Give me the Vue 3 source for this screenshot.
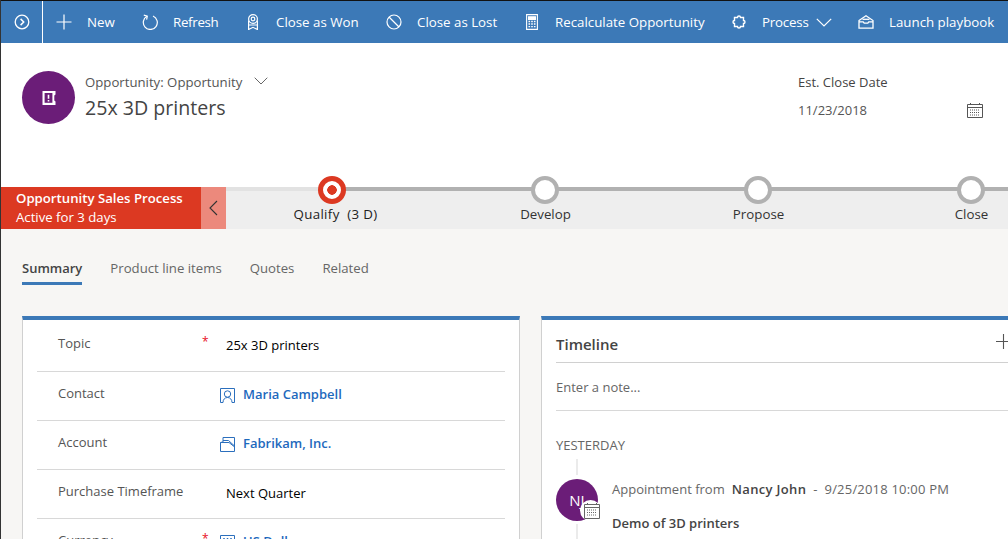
<template>
  <div class="page">
    <!-- command bar -->
    <div class="cmdbar">
      <div class="toggle">
        <svg width="16" height="16" viewBox="0 0 16 16" fill="none" stroke="#fff" stroke-width="1.3">
          <circle cx="8" cy="8" r="6.8" />
          <path d="M6.6 4.9 9.7 8l-3.1 3.1" stroke-width="1.5" />
        </svg>
      </div>
      <div class="cmd cmd-new">
        <svg class="ic" viewBox="0 0 16 16" fill="none" stroke="#fff" stroke-width="1.2"><path d="M8 .5v15M.5 8h15" /></svg>
        <span>New</span>
      </div>
      <div class="cmd cmd-refresh">
        <svg class="ic" viewBox="0 0 16 16" fill="none" stroke="#fff" stroke-width="1.2">
          <path d="M5 2.3A7 7 0 1 0 11 2" />
          <path d="M1.8 1.2 5.3 2.2 4.6 5.6" />
        </svg>
        <span>Refresh</span>
      </div>
      <div class="cmd cmd-won">
        <svg class="ic" viewBox="0 0 16 16" fill="none" stroke="#fff" stroke-width="1.2">
          <circle cx="8" cy="5" r="4.4" />
          <circle cx="8" cy="5" r="1.8" />
          <path d="M3.6 6.5V15.5L8 13.3l4.4 2.2V6.5M3.6 11h8.8" />
        </svg>
        <span>Close as Won</span>
      </div>
      <div class="cmd cmd-lost">
        <svg class="ic" viewBox="0 0 16 16" fill="none" stroke="#fff" stroke-width="1.2">
          <circle cx="8" cy="8" r="7" />
          <path d="M3 3l10 10" />
        </svg>
        <span>Close as Lost</span>
      </div>
      <div class="cmd cmd-calc">
        <svg class="ic" viewBox="0 0 16 16" fill="none" stroke="#fff" stroke-width="1.1">
          <path d="M2.6.6h10.8v14.8H2.6z" />
          <path d="M4.5 2.8h7v2.6h-7z" fill="#fff" />
          <path d="M4.5 7.5h7M4.5 10h7M4.5 12.6h7" stroke-width="1.4" stroke-dasharray="1.6 1.1" />
        </svg>
        <span>Recalculate Opportunity</span>
      </div>
      <div class="cmd cmd-process">
        <svg class="ic" viewBox="0 0 16 16" fill="none" stroke="#fff" stroke-width="1.4">
          <path d="M6.5 3.5a1.5 1.5 0 0 1 3 0H12.5V6.5a1.5 1.5 0 0 1 0 3V12.5H9.500a1.500 1.500 0 0 1-3 0H3.500V9.500a1.500 1.500 0 0 1 0-3V3.500z" />
        </svg>
        <span>Process</span>
        <svg class="cmd-chev" viewBox="0 0 16 9" fill="none" stroke="#fff" stroke-width="1.2"><path d="M.8.8 8 8l7.200-7.200" /></svg>
      </div>
      <div class="cmd cmd-play">
        <svg class="ic" viewBox="0 0 16 16" fill="none" stroke="#fff" stroke-width="1.3">
          <path d="M1 6.500 8 1.800l7 4.700v7.700H1z" />
          <path d="M1 7.800h4.200l1 1.400h3.600l1-1.400H15" />
          <path d="M4.500 5.300h7" />
        </svg>
        <span>Launch playbook</span>
      </div>
    </div>

    <!-- record header -->
    <div class="header">
      <div class="avatar">
        <svg width="14" height="16" viewBox="0 0 14 16" fill="none">
          <path d="M.5 1h13v3.400l-1.200 1v5l1.200 1V15H.5z" fill="#fff" />
          <path d="M2.600 3h7.800v9.800H2.600z" fill="#6b1d78" />
          <path d="M6.500 4.800v4M6.500 10v1.400" stroke="#fff" stroke-width="1.600" />
        </svg>
      </div>
      <div class="titles">
        <div class="form-name">
          <span>Opportunity: Opportunity</span>
          <svg class="form-chev" viewBox="0 0 14 8" fill="none" stroke="#666" stroke-width="1"><path d="M.7.7 7 7l6.300-6.300" /></svg>
        </div>
        <div class="rec-name">25x 3D printers</div>
      </div>
      <div class="close-date">
        <div class="cd-label">Est. Close Date</div>
        <div class="cd-row">
          <span>11/23/2018</span>
          <svg width="16" height="15" viewBox="0 0 16 15" fill="none" stroke="#555" stroke-width="1">
            <path d="M.5 1.500h15v13H.5zM.5 4.500h15M3.500 0v2M12.500 0v2" />
            <path d="M3 7h10M3 9.500h10M3 12h10" stroke-dasharray="1 1" />
          </svg>
        </div>
      </div>
    </div>

    <!-- business process flow -->
    <div class="bpf">
      <div class="bpf-name">
        <div class="bpf-title">Opportunity Sales Process</div>
        <div>Active for 3 days</div>
      </div>
      <div class="bpf-collapse">
        <svg width="9" height="16" viewBox="0 0 9 16" fill="none" stroke="#333" stroke-width="1.1"><path d="M8 1 1 8l7 7" /></svg>
      </div>
      <div class="stages">
        <div class="line-done"></div>
        <div class="line-rest"></div>
        <div v-for="(s, i) in stages" :key="s" class="stage" :class="{ active: i === 0 }">
          <div class="dot"></div>
          <div class="stage-label">{{ s }}</div>
        </div>
      </div>
    </div>

    <!-- tabs -->
    <div class="tabs">
      <div v-for="(t, i) in tabs" :key="t" class="tab" :class="{ on: i === 0 }">{{ t }}</div>
    </div>

    <!-- body -->
    <div class="cols">
      <div class="card form">
        <div class="row">
          <div class="lbl">Topic</div>
          <div class="req">*</div>
          <div class="val">25x 3D printers</div>
        </div>
        <div class="row">
          <div class="lbl">Contact</div>
          <div class="req"></div>
          <div class="val link">
            <svg class="lk" viewBox="0 0 15 15" fill="none" stroke="#2b6fbd" stroke-width="1">
              <path d="M3 14.500H.5V.5h14v14H12" />
              <circle cx="7.500" cy="6" r="3.200" />
              <path d="M3 14.500c0-3 1.800-5 4.500-5s4.500 2 4.500 5" />
            </svg>
            <span>Maria Campbell</span>
          </div>
        </div>
        <div class="row">
          <div class="lbl">Account</div>
          <div class="req"></div>
          <div class="val link">
            <svg class="lk" viewBox="0 0 15 15" fill="none" stroke="#2b6fbd" stroke-width="1">
              <path d="M.5 5.500v9h14V9" />
              <path d="M.5 5.500 3 5V.5h11.500V9L14 8.500 8.500 3.500H3" />
              <path d="M.5 5.500H9l5 4" />
            </svg>
            <span>Fabrikam, Inc.</span>
          </div>
        </div>
        <div class="row">
          <div class="lbl">Purchase Timeframe</div>
          <div class="req"></div>
          <div class="val">Next Quarter</div>
        </div>
        <div class="row last">
          <div class="lbl">Currency</div>
          <div class="req">*</div>
          <div class="val link">
            <svg class="lk" viewBox="0 0 15 15" fill="none" stroke="#2b6fbd" stroke-width="1">
              <path d="M.5.500h14v14H.5z" />
              <path d="M4 3v3M7.500 3v3M11 3v3" stroke-width="1.500" />
            </svg>
            <span>US Dollar</span>
          </div>
        </div>
      </div>

      <div class="card timeline">
        <div class="tl-head">
          <span>Timeline</span>
          <svg class="tl-plus" viewBox="0 0 15 15" fill="none" stroke="#555" stroke-width="1.100"><path d="M7.500 0v15M0 7.500h15" /></svg>
        </div>
        <div class="tl-note">Enter a note...</div>
        <div class="tl-day">YESTERDAY</div>
        <div class="tl-track"></div>
        <div class="tl-item">
          <div class="tl-avatar">
            <span>NJ</span>
            <div class="tl-badge">
              <svg width="16" height="16" viewBox="0 0 16 16" fill="none" stroke="#666" stroke-width="1">
                <path d="M.5 1.500h15v14H.5zM.5 4.500h15M3.500 0v2M12.500 0v2" />
                <path d="M3 7h10M3 9.500h10M3 12h10" stroke-dasharray="1 1" />
              </svg>
            </div>
          </div>
          <div class="tl-body">
            <div class="tl-meta">
              <span>Appointment from</span>
              <b>Nancy John</b>
              <span>-</span>
              <span class="tl-date">9/25/2018 10:00 PM</span>
            </div>
            <div class="tl-title">Demo of 3D printers</div>
          </div>
        </div>
      </div>
    </div>
  </div>
</template>

<script setup>
const stages = ['Qualify  (3 D)', 'Develop', 'Propose', 'Close']
const tabs = ['Summary', 'Product line items', 'Quotes', 'Related']
</script>

<style>
html, body {
  margin: 0;
  background: #fff;
  overflow: hidden;
}
</style>

<style scoped>
.page {
  width: 1008px;
  height: 539px;
  overflow: hidden;
  box-sizing: border-box;
  border-left: 1px solid #333;
  background: #f7f6f4;
  font-family: "Open Sans", "Noto Sans", sans-serif;
  font-size: 13px;
  color: #333;
}

.cmdbar {
  height: 42px;
  border-top: 1px solid #111;
  background: #3c79b7;
  color: #fff;
  display: flex;
  align-items: center;
  white-space: nowrap;
  overflow: hidden;
}
.toggle {
  width: 42px;
  height: 42px;
  flex: none;
  box-sizing: border-box;
  border-right: 1px solid #fff;
  display: flex;
  align-items: center;
  justify-content: center;
}
.cmd {
  display: flex;
  align-items: center;
  flex: none;
  font-size: 13.3px;
}
.ic {
  width: 16px;
  height: 16px;
  margin-right: 15px;
  flex: none;
}
.cmd-new { margin-left: 13px; width: 86px; }
.cmd-refresh { width: 103px; letter-spacing: -0.3px; }
.cmd-won { width: 141px; }
.cmd-lost { width: 138px; }
.cmd-calc { width: 207px; }
.cmd-process { width: 127px; letter-spacing: -0.2px; }
.cmd-play { width: 140px; }
.cmd-chev {
  width: 16px;
  height: 9px;
  margin-left: 7px;
}

.header {
  height: 144px;
  background: #fff;
  display: flex;
  box-sizing: border-box;
  padding: 28px 0 0 21px;
}
.avatar {
  width: 53px;
  height: 53px;
  border-radius: 50%;
  background: #6b1d78;
  display: flex;
  align-items: center;
  justify-content: center;
  flex: none;
}
.titles {
  margin-left: 10px;
  width: 713px;
}
.form-name {
  font-size: 13.2px;
  line-height: 20px;
  margin-top: 1px;
  color: #555;
  display: flex;
  align-items: center;
}
.form-chev {
  width: 14px;
  height: 8px;
  margin: -3px 0 0 12px;
}
.rec-name {
  font-size: 19.6px;
  line-height: 28px;
  margin-top: 2px;
  color: #444;
}
.close-date {
  width: 185px;
  color: #444;
}
.cd-label {
  line-height: 20px;
  margin-top: 1px;
}
.cd-row {
  display: flex;
  justify-content: space-between;
  align-items: center;
  margin-top: 8px;
  line-height: 20px;
  color: #555;
}

.bpf {
  height: 42px;
  display: flex;
  background: #eeeeee;
}
.bpf-name {
  width: 200px;
  flex: none;
  box-sizing: border-box;
  padding: 2px 0 0 15px;
  background: #dc3922;
  color: #fff;
  font-size: 13.2px;
  line-height: 19px;
}
.bpf-title {
  font-weight: 600;
}
.bpf-collapse {
  width: 25px;
  flex: none;
  background: #ec897c;
  display: flex;
  align-items: center;
  justify-content: center;
}
.stages {
  position: relative;
  display: flex;
  flex: none;
  width: 782px;
}
.line-done,
.line-rest {
  position: absolute;
  top: 0;
  height: 4px;
}
.line-done {
  left: 0;
  width: 106px;
  background: #e2e2e2;
}
.line-rest {
  left: 106px;
  right: 0;
  background: #b1b1b1;
}
.stage {
  position: relative;
  width: 213px;
  flex: none;
  display: flex;
  flex-direction: column;
  align-items: center;
}
.stage.active {
  margin-left: -1px;
}
.dot {
  width: 28px;
  height: 28px;
  box-sizing: border-box;
  margin-top: -11px;
  border: 4px solid #b1b1b1;
  border-radius: 50%;
  background: #fff;
  z-index: 1;
}
.stage.active .dot {
  border: 5px solid #dc3922;
  background: radial-gradient(circle, #dc3922 0 4.5px, #fff 5px);
}
.stage-label {
  margin: 0 0 0 2px;
  font-size: 13.3px;
  line-height: 20px;
  white-space: pre;
  color: #333;
}
.stage.active .stage-label {
  margin-left: 8px;
  letter-spacing: 0.35px;
  color: #222;
}

.tabs {
  height: 87px;
  box-sizing: border-box;
  display: flex;
  align-items: flex-start;
  gap: 28px;
  padding: 29px 0 0 21px;
  color: #666;
  font-size: 13.2px;
}
.tab {
  line-height: 20px;
  height: 27px;
  box-sizing: border-box;
}
.tab.on {
  color: #444;
  font-size: 13px;
  font-weight: 600;
  border-bottom: 3px solid #3c79b7;
}

.cols {
  display: flex;
  gap: 21px;
  padding-left: 21px;
}
.card {
  flex: none;
  background: #fff;
  box-sizing: border-box;
  border: 1px solid #d0d0d0;
  border-top: 4px solid #3c79b7;
  height: 260px;
}
.form {
  width: 498px;
  padding: 0 14px;
}
.row {
  height: 49px;
  box-sizing: border-box;
  border-bottom: 1px solid #d8d8d8;
  display: flex;
  align-items: flex-start;
  padding: 11px 0 0 21px;
  line-height: 20px;
}
.row:first-child {
  height: 52px;
  padding-top: 13px;
}
.row.last {
  border-bottom: 0;
}
.lbl {
  width: 145px;
  flex: none;
  color: #555;
}
.req {
  width: 17px;
  flex: none;
  margin-top: -1px;
  margin-left: -1px;
  margin-right: 1px;
  font-size: 12px;
  color: #e81123;
}
.val {
  padding-left: 6px;
  margin-top: 2px;
  color: #000;
}
.val.link {
  display: flex;
  align-items: center;
  padding-left: 0;
  color: #1e69bd;
  font-weight: 600;
  margin-top: 1px;
}
.lk {
  width: 15px;
  height: 15px;
  margin-right: 8px;
  margin-top: 3px;
}
.timeline {
  width: 480px;
  padding: 0 14px;
  border-right: 0;
}
.tl-head {
  height: 43px;
  box-sizing: border-box;
  padding-top: 14px;
  font-size: 15px;
  line-height: 20px;
  font-weight: 600;
  color: #444;
  border-bottom: 1px solid #d0d0d0;
  display: flex;
  justify-content: space-between;
  margin-right: -14px;
}
.tl-plus {
  width: 15px;
  height: 15px;
  margin-right: 10px;
}
.tl-note {
  height: 48px;
  box-sizing: border-box;
  padding-top: 14px;
  line-height: 20px;
  color: #666;
  border-bottom: 1px solid #d8d8d8;
  margin-right: -14px;
}
.tl-day {
  margin-top: 24px;
  line-height: 20px;
  color: #666;
}
.tl-track {
  width: 2px;
  height: 16px;
  margin: 4px 0 0 20px;
  background: #ebebeb;
}
.tl-item {
  margin-top: 4px;
  display: flex;
}
.tl-avatar {
  position: relative;
  width: 42px;
  height: 42px;
  flex: none;
  border-radius: 50%;
  background: #6b1d78;
  color: #fff;
  font-size: 15px;
  line-height: 42px;
  text-align: center;
}
.tl-avatar::after {
  content: "";
  position: absolute;
  left: 20px;
  top: 45px;
  width: 2px;
  height: 30px;
  background: #ebebeb;
}
.tl-badge {
  position: absolute;
  left: 24px;
  top: 21px;
  width: 21px;
  height: 21px;
  box-sizing: border-box;
  padding-left: 3px;
  border-radius: 50%;
  background: #fff;
  display: flex;
  align-items: center;
  justify-content: center;
}
.tl-body {
  margin-left: 14px;
}
.tl-meta {
  display: flex;
  gap: 7px;
  line-height: 20px;
  color: #666;
  white-space: pre;
}
.tl-meta b {
  letter-spacing: 0.35px;
  font-weight: 600;
  color: #444;
}
.tl-date {
  letter-spacing: 0.2px;
}
.tl-title {
  margin-top: 14px;
  line-height: 20px;
  font-weight: 600;
  color: #444;
}
</style>
